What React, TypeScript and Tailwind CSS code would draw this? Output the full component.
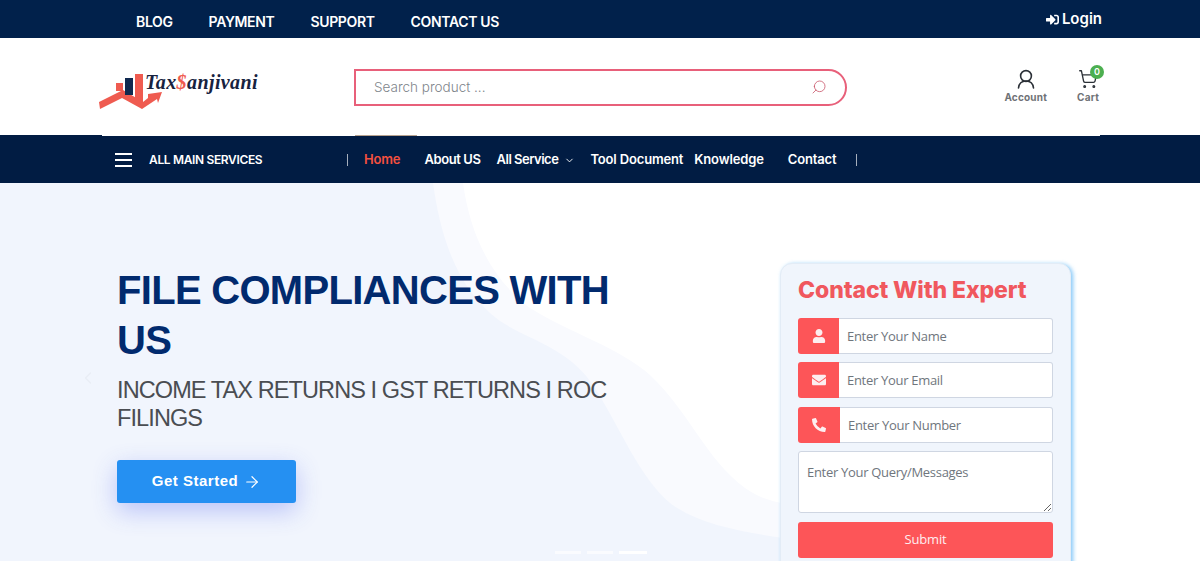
import { ArrowRight, ChevronDown, ChevronLeft, Search, ShoppingCart } from 'lucide-react';
import type { ReactNode } from 'react';
import { FaEnvelope, FaPhoneAlt, FaSignInAlt, FaUser } from 'react-icons/fa';

const topLinks = ['BLOG', 'PAYMENT', 'SUPPORT', 'CONTACT US'];

function Logo() {
  return (
    <div className="flex h-[44px] w-[160px] items-start">
      <svg width="45" height="44" viewBox="0 0 45 44" className="shrink-0 overflow-visible">
        <rect x="16" y="18" width="7" height="8" fill="#ef5b50" />
        <rect x="35" y="9" width="8" height="29" fill="#ef5b50" />
        <path d="M-1 37 L23 25 L43 37 L48 33 L48 29 L62 27 L58 38 L57 34 L42 44 L22 33 L0 44 Z" fill="#ef5b50" />
        <rect x="25" y="13" width="8" height="17" fill="#10294f" />
      </svg>
      <span className="mt-[5px] font-['Liberation_Serif',serif] text-[20px] leading-[24px] font-bold tracking-[0.4px] text-[#17223f] italic">
        Tax<span className="text-[#ef5b50]">$</span>anjivani
      </span>
    </div>
  );
}

function ContactField({ icon, placeholder, iconWidth }: { icon: ReactNode; placeholder: string; iconWidth: string }) {
  return (
    <div className="flex h-[36px] w-[255px]">
      <div className={`flex ${iconWidth} shrink-0 items-center justify-center rounded-l-[3px] bg-[#fd5558] text-[14px] text-[#fdeef0]`}>
        {icon}
      </div>
      <input
        placeholder={placeholder}
        className="min-w-0 flex-1 rounded-r-[3px] border border-l-0 border-[#cfd6e2] bg-white pt-[2px] pl-[8px] font-['Open_Sans',sans-serif] text-[13px] tracking-[-0.3px] outline-none placeholder:text-[#6f767d]"
      />
    </div>
  );
}

export default function App() {
  return (
    <div className="h-[561px] w-[1200px] overflow-hidden bg-white font-['Inter',sans-serif]">
      <div className="flex h-[38px] items-center justify-between bg-[#01214b] pr-[98px] pl-[136px] text-white">
        <nav className="mt-[5px] flex gap-[36px] text-[14px] font-semibold tracking-[-0.35px]">
          {topLinks.map((link) => (
            <a key={link} href="#">
              {link}
            </a>
          ))}
        </nav>
        <a href="#" className="flex items-center gap-[3px] text-[15px] font-semibold">
          <FaSignInAlt className="text-[13px]" />
          Login
        </a>
      </div>

      <header className="flex h-[97px] items-center bg-white pr-[101px] pl-[100px]">
        <Logo />
        <div className="mt-[1px] ml-[94px] flex h-[37px] w-[493px] items-center justify-between rounded-r-[19px] border-2 border-[#e8607a] pr-[18px] pl-[18px]">
          <span className="mt-[1px] text-[13.5px] font-light text-[#80858b]">Search product ...</span>
          <Search size={16} strokeWidth={1.2} className="-scale-x-100 text-[#c9566a]" />
        </div>
        <div className="ml-auto flex gap-[30px] text-[10px] font-bold tracking-[0.2px] text-[#6f7276]">
          <div className="flex flex-col items-center gap-[1px]">
            <svg width="20" height="20" viewBox="0 0 20 20" fill="none" stroke="#2b3037" strokeWidth="1.6" strokeLinecap="round">
              <circle cx="10" cy="7" r="5.4" />
              <path d="M2.5 19 C3 14.5 6 12 10 12 C14 12 17 14.5 17.5 19" />
            </svg>
            Account
          </div>
          <div className="relative flex flex-col items-center gap-[1px]">
            <ShoppingCart size={20} strokeWidth={1.6} className="text-[#2b3037]" />
            Cart
            <span className="absolute -top-[4px] left-[13px] flex h-[14px] w-[14px] items-center justify-center rounded-full bg-[#4caf50] text-[9px] font-semibold text-white">
              0
            </span>
          </div>
        </div>
      </header>

      <nav className="relative flex h-[48px] items-center bg-[#011c43] pt-[2px] pl-[115px] text-[13px] font-semibold tracking-[-0.15px] text-white">
        <div className="absolute top-0 right-[100px] left-[102px] h-px bg-white" />
        <div className="absolute top-0 left-[355px] h-px w-[62px] bg-[#b7a28f]" />
        <div className="flex w-[232px] items-center text-[12px] tracking-[-0.35px]">
          <div className="flex w-[34px] flex-col gap-[4px]">
            <span className="h-[2px] w-[17px] bg-white" />
            <span className="h-[2px] w-[17px] bg-white" />
            <span className="h-[2px] w-[17px] bg-white" />
          </div>
          ALL MAIN SERVICES
        </div>
        <div className="h-[12px] w-px bg-[#a6afbd]" />
        <a href="#" className="ml-[16px] text-[#f4503f]">Home</a>
        <a href="#" className="ml-[24px] tracking-[-0.4px]">About US</a>
        <a href="#" className="ml-[16px] flex items-center gap-[6px] tracking-[-0.5px]">
          All Service
          <ChevronDown size={11} />
        </a>
        <a href="#" className="ml-[15px]">Tool Document</a>
        <a href="#" className="ml-[11px]">Knowledge</a>
        <a href="#" className="ml-[24px]">Contact</a>
        <div className="ml-[20px] h-[12px] w-px bg-[#a6afbd]" />
      </nav>

      <section className="relative flex h-[378px] overflow-hidden bg-white">
        {/* wave shapes behind the hero */}
        <svg className="absolute inset-0" width="1200" height="378" viewBox="0 0 1200 378">
          <path d="M463 0 C470 50 490 95 530 125 C570 150 620 165 650 192 C690 230 705 275 745 305 C760 315 770 318 790 322 L790 378 L0 378 L0 0 Z" fill="#f9fafe" />
          <path d="M433 0 C440 50 455 105 500 138 C530 158 570 165 595 205 C620 245 640 295 670 320 C700 343 750 350 790 356 L790 378 L0 378 L0 0 Z" fill="#f1f5fd" />
        </svg>
        <ChevronLeft size={20} strokeWidth={1.5} className="absolute top-[185px] left-[78px] text-[#e9edf5]" />

        <div className="relative w-[780px] pt-[82px] pl-[117px] font-['Liberation_Sans',sans-serif]">
          <h1 className="w-[520px] text-[40px] leading-[50px] font-bold tracking-[-0.7px] text-[#012a6e]">
            FILE COMPLIANCES WITH US
          </h1>
          <p className="mt-[11px] w-[500px] text-[23.5px] leading-[28px] tracking-[-0.9px] text-[#4a4d52]">
            INCOME TAX RETURNS I GST RETURNS I ROC FILINGS
          </p>
          <a
            href="#"
            className="mt-[28px] flex h-[43px] w-[179px] items-center justify-center gap-[5px] rounded-[3px] bg-[#2590f2] text-[15px] font-bold tracking-[0.5px] text-white shadow-[0_8px_25px_rgba(60,80,240,0.3)]"
          >
            Get Started
            <ArrowRight size={18} strokeWidth={1.6} />
          </a>
        </div>

        <div className="relative mt-[80px] flex h-[320px] w-[291px] flex-col gap-[8.5px] rounded-[12px] border border-[#e3ecf6] bg-[#f0f5fc] px-[17px] shadow-[2px_1px_4px_rgba(90,180,245,0.75)]">
          <h2 className="mt-[11px] mb-[4px] text-[23px] leading-[30px] font-extrabold tracking-[-0.1px] text-[#f0585e]">Contact With Expert</h2>
          <ContactField icon={<FaUser />} placeholder="Enter Your Name" iconWidth="w-[41px]" />
          <ContactField icon={<FaEnvelope />} placeholder="Enter Your Email" iconWidth="w-[41px]" />
          <ContactField icon={<FaPhoneAlt />} placeholder="Enter Your Number" iconWidth="w-[42px]" />
          <textarea
            placeholder="Enter Your Query/Messages"
            className="h-[62px] w-[255px] rounded-[3px] border border-[#cfd6e2] bg-white px-[8px] py-[10px] font-['Open_Sans',sans-serif] text-[13px] leading-[20px] tracking-[-0.3px] outline-none placeholder:text-[#6f767d]"
          />
          <button className="h-[36px] w-[255px] rounded-[3px] bg-[#fd5558] font-['Open_Sans',sans-serif] text-[13px] tracking-[-0.2px] text-[#fdeef0]">
            Submit
          </button>
        </div>

        <div className="absolute bottom-[7px] left-[555px] flex gap-[6px]">
          <span className="h-[3px] w-[26px] bg-[#fafbfe]" />
          <span className="h-[3px] w-[26px] bg-[#fafbfe]" />
          <span className="h-[3px] w-[28px] bg-white" />
        </div>
      </section>
    </div>
  );
}
